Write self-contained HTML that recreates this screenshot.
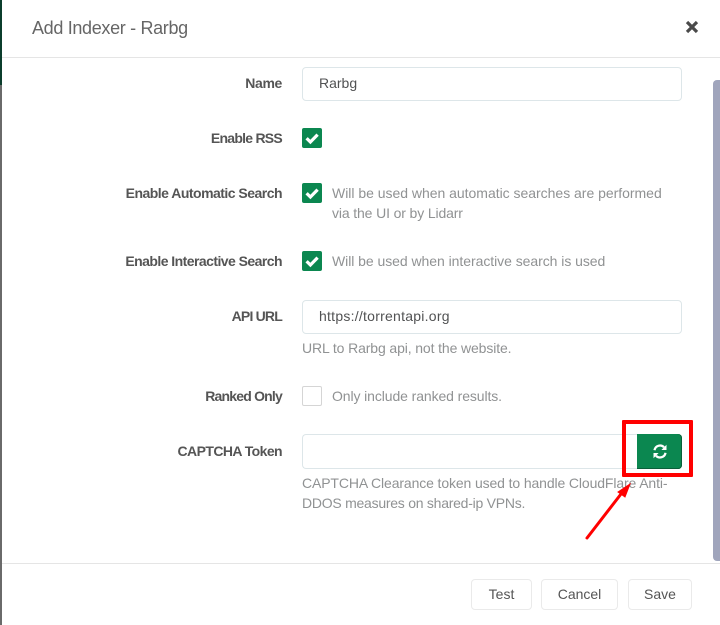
<!DOCTYPE html>
<html><head><meta charset="utf-8"><style>
html,body{margin:0;padding:0;background:#fff}
#p{position:relative;width:720px;height:625px;overflow:hidden;background:#fff;font-family:"Liberation Sans",sans-serif;font-size:14px;color:#515253}
#p div{position:absolute;white-space:nowrap}
.l{right:438px;text-align:right;font-weight:bold;line-height:20px;letter-spacing:-.35px;color:#555}
.h{left:332px;color:#909293;line-height:20px}
.i{left:302px;width:378px;height:32px;border:1px solid #dde6e9;border-radius:4px;line-height:31px;text-indent:16px;background:#fff}
.c{left:302px;width:20px;height:20px;background:#0b8750;border-radius:2px}
.c svg{position:absolute;left:0;top:0}
.b{top:579px;height:29px;border:1px solid #eaeaea;border-radius:4px;line-height:29px;text-align:center;color:#555}
</style></head><body><div id="p">
<div style="left:0;top:0;width:2px;height:85px;background:#0b3d2c"></div>
<div style="left:0;top:85px;width:2px;height:540px;background:#6a6a6a"></div>
<div style="left:32px;top:16px;font-size:18px;line-height:24px;color:#666;letter-spacing:-.33px">Add Indexer - Rarbg</div>
<svg style="position:absolute;left:685px;top:20px" width="14" height="14"><path d="M2 2L12 12M12 2L2 12" stroke="#4a4a4a" stroke-width="3.2"/></svg>
<div style="left:2px;top:57px;width:718px;height:1px;background:#e5e5e5"></div>
<div style="left:2px;top:563px;width:718px;height:1px;background:#e5e5e5"></div>
<div style="left:713px;top:80px;width:7px;height:481px;background:#a0a5bc;border-radius:4px 0 0 4px"></div>

<div class="l" style="top:73px">Name</div>
<div class="i" style="top:67px">Rarbg</div>

<div class="l" style="top:128px;letter-spacing:-.75px">Enable RSS</div>
<div class="c" style="top:128px"><svg width="20" height="20"><path d="M4.6 10.2L8.4 14L15.6 6.6" fill="none" stroke="#fff" stroke-width="3.2"/></svg></div>

<div class="l" style="top:183px;letter-spacing:-.52px">Enable Automatic Search</div>
<div class="c" style="top:183px"><svg width="20" height="20"><path d="M4.6 10.2L8.4 14L15.6 6.6" fill="none" stroke="#fff" stroke-width="3.2"/></svg></div>
<div class="h" style="top:183px;letter-spacing:-.02px">Will be used when automatic searches are performed</div>
<div class="h" style="top:203px;letter-spacing:-.13px">via the UI or by Lidarr</div>

<div class="l" style="top:251px;letter-spacing:-.55px">Enable Interactive Search</div>
<div class="c" style="top:251px"><svg width="20" height="20"><path d="M4.6 10.2L8.4 14L15.6 6.6" fill="none" stroke="#fff" stroke-width="3.2"/></svg></div>
<div class="h" style="top:251px;letter-spacing:-.05px">Will be used when interactive search is used</div>

<div class="l" style="top:306px;letter-spacing:-.8px">API URL</div>
<div class="i" style="top:300px;letter-spacing:.25px">https://torrentapi.org</div>
<div class="h" style="left:302px;top:338px;letter-spacing:-.12px">URL to Rarbg api, not the website.</div>

<div class="l" style="top:386px;letter-spacing:-.8px">Ranked Only</div>
<div style="left:302px;top:386px;width:18px;height:18px;border:1px solid #d5d5d5;border-radius:2px"></div>
<div class="h" style="top:386px;letter-spacing:-.1px">Only include ranked results.</div>

<div class="l" style="top:441px;letter-spacing:-.58px">CAPTCHA Token</div>
<div style="left:302px;top:434px;width:334px;height:33px;border:1px solid #dde6e9;border-right:0;border-radius:4px 0 0 4px"></div>
<div style="left:637px;top:434px;width:45px;height:35px;background:#0b8750;border-radius:0 4px 4px 0;box-shadow:inset 0 -1px 0 #0a5f3a,inset -1px 0 0 #0a5f3a"></div>
<svg style="position:absolute;left:652px;top:444px" width="16" height="15" viewBox="0 0 16 15"><path d="M2.5 6.2A5.6 5.6 0 0 1 12 3.2" fill="none" stroke="#fff" stroke-width="2.3"/><path d="M14.5 .8V6H9.4Z" fill="#fff"/><path d="M13.5 8.8A5.6 5.6 0 0 1 4 11.8" fill="none" stroke="#fff" stroke-width="2.3"/><path d="M1.5 14.2V9H6.6Z" fill="#fff"/></svg>
<div style="left:622px;top:420px;width:63px;height:49px;border:4px solid #f00;border-radius:1px"></div>
<div class="h" style="left:302px;top:473px;letter-spacing:-.12px">CAPTCHA Clearance token used to handle CloudFlare Anti-</div>
<div class="h" style="left:302px;top:493px;letter-spacing:-.25px">DDOS measures on shared-ip VPNs.</div>
<svg style="position:absolute;left:580px;top:480px" width="55" height="65"><path d="M7 58L41 14" stroke="#f00" stroke-width="3" stroke-linecap="round"/><path d="M50 4L38 12L45 17Z" fill="#f00" stroke="#f00" stroke-width="1"/></svg>

<div class="b" style="left:471px;width:59px">Test</div>
<div class="b" style="left:541px;width:75px">Cancel</div>
<div class="b" style="left:628px;width:62px">Save</div>
</div></body></html>
